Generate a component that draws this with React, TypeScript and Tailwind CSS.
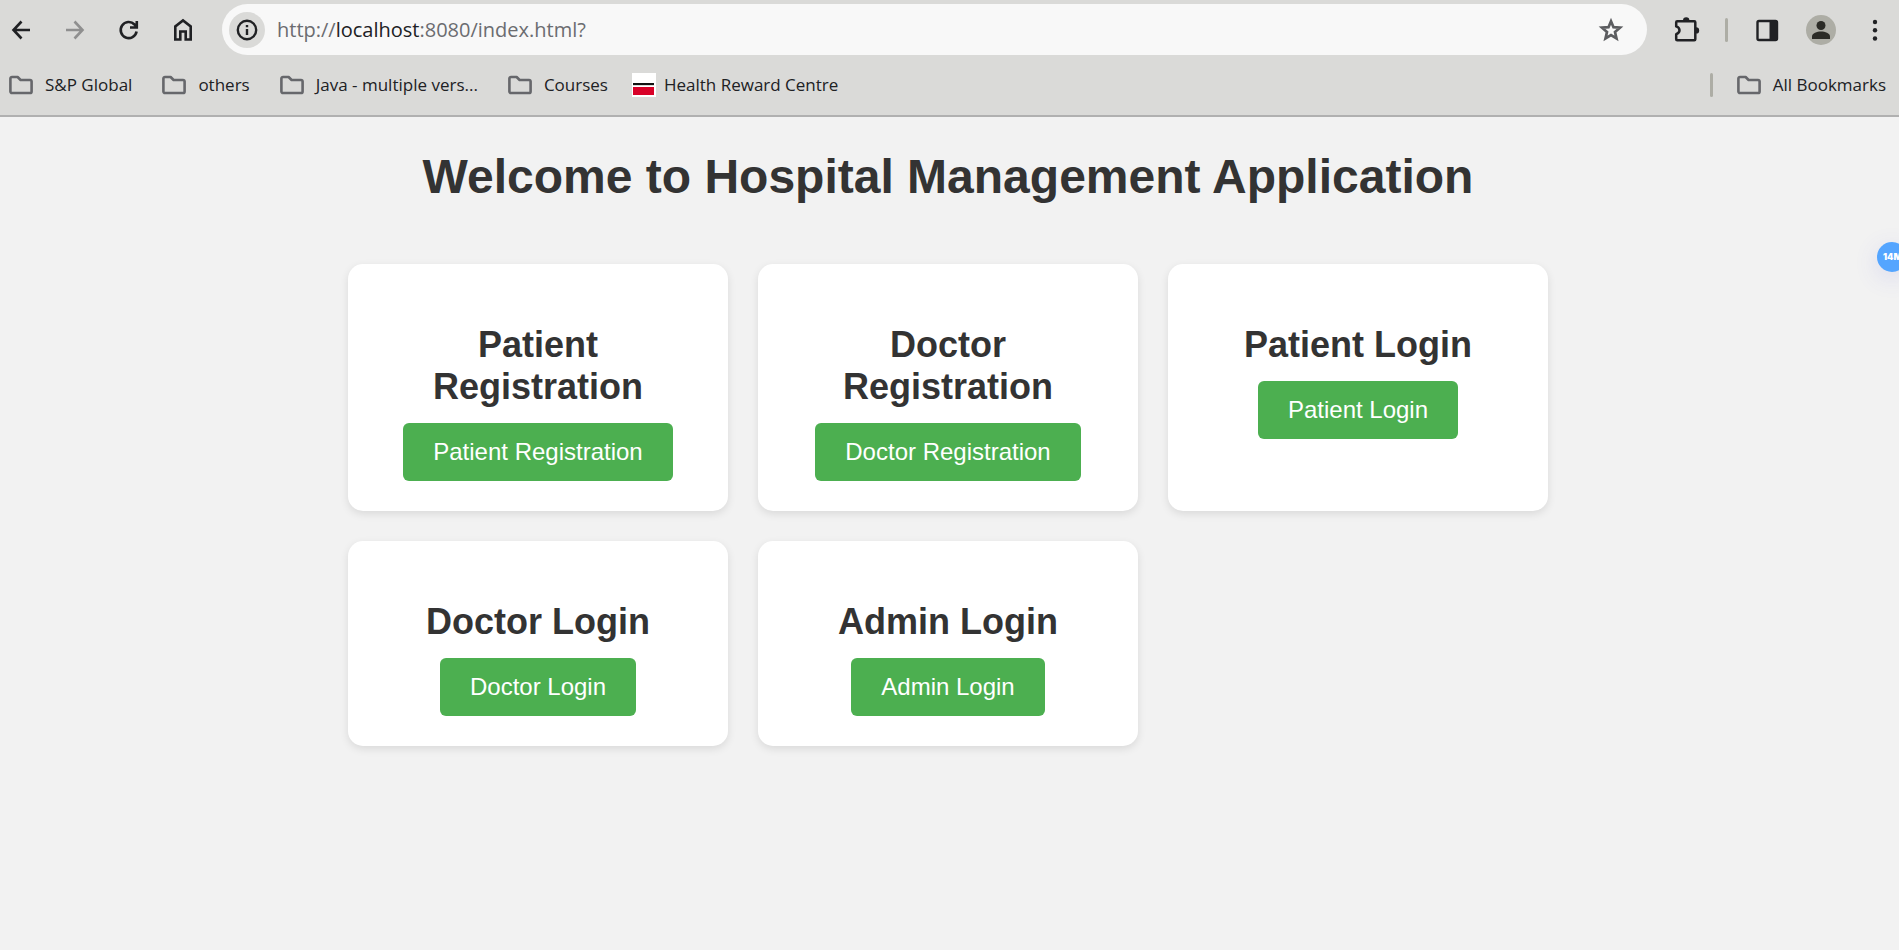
import type { ReactNode } from "react";

const folders = ["S&P Global", "others", "Java - multiple vers...", "Courses"];

const cards = [
  "Patient Registration",
  "Doctor Registration",
  "Patient Login",
  "Doctor Login",
  "Admin Login",
];

function FolderIcon() {
  return (
    <svg className="h-5 w-6 shrink-0" viewBox="0 0 24 20" fill="none" stroke="#66676b" strokeWidth="2.6" strokeLinejoin="round" aria-hidden="true">
      <path d="M3 2h5.6l3 3H21a1.6 1.6 0 0 1 1.6 1.6v9.8A1.6 1.6 0 0 1 21 18H3a1.6 1.6 0 0 1-1.6-1.6V3.6A1.6 1.6 0 0 1 3 2z" />
    </svg>
  );
}

function FlagIcon() {
  return (
    <svg className="size-6 shrink-0" viewBox="0 0 24 24" aria-hidden="true">
      <rect width="24" height="24" fill="#fff" />
      <rect x="1" y="10" width="21" height="2" fill="#111" />
      <rect x="1" y="12" width="21" height="1" fill="#dadad8" />
      <rect x="1" y="14" width="21" height="8" fill="#d80027" />
    </svg>
  );
}

function Bookmark({ children }: { children: ReactNode }) {
  return (
    <a href="#" className="flex items-center gap-3 whitespace-nowrap">
      <FolderIcon />
      <span>{children}</span>
    </a>
  );
}

function ToolButton({ label, children }: { label: string; children: ReactNode }) {
  return (
    <button type="button" aria-label={label} className="flex size-[30px] shrink-0 items-center justify-center">
      {children}
    </button>
  );
}

function Browser() {
  return (
    <header className="border-b-2 border-[#b0b0b0] bg-[#dadad8] font-['Open_Sans',sans-serif] text-[#202124]">
      <div className="flex items-center pt-1 pr-[9px] pl-[6px]">
        <nav aria-label="Navigation" className="flex gap-6">
          <ToolButton label="Back">
            <svg className="size-[30px]" viewBox="0 0 30 30" fill="none" stroke="#202124" strokeWidth="2.6" aria-hidden="true">
              <path d="M24 15H8M15.500 6.500L7.500 15l8 8.500" />
            </svg>
          </ToolButton>
          <ToolButton label="Forward">
            <svg className="size-[30px]" viewBox="0 0 30 30" fill="none" stroke="#8f8f8f" strokeWidth="2.6" aria-hidden="true">
              <path d="M6 15h16M14.500 6.500l8 8.500l-8 8.500" />
            </svg>
          </ToolButton>
          <ToolButton label="Reload">
            <svg className="size-[30px]" viewBox="0 0 30 30" fill="none" stroke="#202124" strokeWidth="2.6" aria-hidden="true">
              <path d="M22.600 16.500A8 8 0 1 1 20.500 9.500L22.600 12M22.800 6v6.500h-6.800" />
            </svg>
          </ToolButton>
          <ToolButton label="Home">
            <svg className="size-[30px]" viewBox="0 0 30 30" fill="none" stroke="#202124" strokeWidth="2.6" aria-hidden="true">
              <path d="M7.300 24.500V11.500L15 5.500l7.700 6v13h-5v-8h-5.400v8z" />
            </svg>
          </ToolButton>
        </nav>
        <div className="ml-6 flex h-[51px] flex-1 items-center rounded-full bg-[#f8f8f8] pr-[21px] pl-[7px]">
          <button type="button" aria-label="Site information" className="flex size-9 shrink-0 items-center justify-center rounded-full bg-[#dadad8]">
            <svg className="size-6" viewBox="0 0 24 24" fill="none" stroke="#202124" strokeWidth="2.4" aria-hidden="true">
              <circle cx="12" cy="12" r="9.200" />
              <path d="M12 11v6M12 7v2.200" />
            </svg>
          </button>
          <div className="ml-3 flex-1 text-xl text-[#6b6c70]">
            http://<span className="text-[#202124]">localhost</span>:8080/index.html?
          </div>
          <ToolButton label="Bookmark this page">
            <svg className="size-[30px]" viewBox="0 0 30 30" fill="none" stroke="#5c5d60" strokeWidth="2.700" aria-hidden="true">
              <path d="M15 6.200l2.500 6 6.500.5-5 4.300 1.500 6.400-5.500-3.400-5.500 3.400 1.500-6.400-5-4.300 6.500-.5z" />
            </svg>
          </ToolButton>
        </div>
        <div className="ml-6 flex items-center">
          <ToolButton label="Extensions">
            <svg className="size-[30px]" viewBox="0 0 30 30" aria-hidden="true">
              <path d="M6.200 6.200h17.100a1 1 0 0 1 1 1v17.100a1 1 0 0 1-1 1H6.200a1 1 0 0 1-1-1v-5.100c2.300-.8 3.300-2 3.300-3.900s-1-3.100-3.300-3.900V7.200a1 1 0 0 1 1-1z" fill="none" stroke="#202124" strokeWidth="2.500" strokeLinejoin="round" />
              <path d="M12 5.500a3.200 3.200 0 0 1 6.400 0zM25 12.200a3.200 3.200 0 0 1 0 6.400z" fill="#202124" />
            </svg>
          </ToolButton>
          <span className="ml-6 h-6 w-[3px] rounded-full bg-[#adada5]" />
          <span className="ml-6 flex gap-6">
            <ToolButton label="Side panel">
              <svg className="size-[30px]" viewBox="0 0 30 30" aria-hidden="true">
                <rect x="5.500" y="6" width="19.500" height="19" rx="1.500" fill="none" stroke="#202124" strokeWidth="2.400" />
                <path d="M17.500 6H25v19h-7.500z" fill="#202124" />
              </svg>
            </ToolButton>
            <ToolButton label="Profile">
              <svg className="size-[30px]" viewBox="0 0 30 30" aria-hidden="true">
                <circle cx="15" cy="15" r="15" fill="#adada5" />
                <circle cx="15" cy="10.500" r="4.500" fill="#2b2b26" />
                <path d="M6 24v-2.500c0-3.500 5-5 9-5s9 1.500 9 5V24z" fill="#2b2b26" />
              </svg>
            </ToolButton>
            <ToolButton label="Menu">
              <svg className="size-[30px]" viewBox="0 0 30 30" fill="#202124" aria-hidden="true">
                <circle cx="15" cy="7" r="2.200" />
                <circle cx="15" cy="15.200" r="2.200" />
                <circle cx="15" cy="23.500" r="2.200" />
              </svg>
            </ToolButton>
          </span>
        </div>
      </div>
      <nav aria-label="Bookmarks" className="flex h-[60px] items-center gap-6 pr-[13px] pl-[9px] text-[17px]">
        <div className="flex gap-[30px]">
          {folders.map((name) => (
            <Bookmark key={name}>{name}</Bookmark>
          ))}
        </div>
        <a href="#" className="flex items-center gap-2 whitespace-nowrap">
          <FlagIcon />
          <span>Health Reward Centre</span>
        </a>
        <div className="ml-auto flex items-center gap-6">
          <span className="h-6 w-[3px] rounded-full bg-[#adada5]" />
          <Bookmark>All Bookmarks</Bookmark>
        </div>
      </nav>
    </header>
  );
}

export default function App() {
  return (
    <div className="flex min-h-screen flex-col bg-[#f2f2f2]">
      <Browser />
      <main className="relative flex-1 overflow-hidden pt-8 pr-[3px] pb-8 text-center font-['Liberation_Sans',Arial,sans-serif] text-[#333333]">
        <h1 className="text-5xl leading-[55px] font-bold">Welcome to Hospital Management Application</h1>
        <div className="mx-auto mt-[60px] grid max-w-[1200px] grid-cols-3 gap-[30px]">
          {cards.map((title) => (
            <section key={title} className="rounded-[15px] bg-white px-[30px] pt-[60px] pb-[30px] shadow-[0_3px_8px_rgba(0,0,0,0.1)]">
              <h2 className="mx-auto max-w-[320px] text-4xl leading-[42px] font-bold">{title}</h2>
              <button type="button" className="mt-[15px] rounded-md bg-[#4caf50] px-[30px] py-[15px] text-2xl leading-7 text-white">
                {title}
              </button>
            </section>
          ))}
        </div>
        <button type="button" className="absolute top-[125px] -right-2 flex size-[30px] items-center rounded-full bg-[#54a5ff] pl-[6px] font-['Inter',sans-serif] text-[9px] font-black text-white shadow-[0_6px_24px_rgba(80,80,220,0.15)]">
          14M
        </button>
      </main>
    </div>
  );
}
